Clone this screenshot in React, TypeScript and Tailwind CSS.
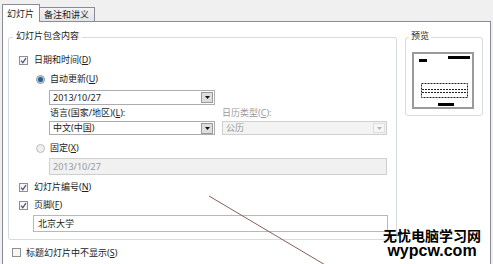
import React from "react";

function Check({ checked = true }: { checked?: boolean }) {
  return (
    <span className="w-[9px] h-[9px] border border-[#8e8f8f] bg-[#f6f6f6] flex items-center justify-center shrink-0">
      {checked && (
        <svg width="7" height="7" viewBox="0 0 7 7">
          <path d="M1 3.6 L2.8 5.6 L6 1.2" stroke="#4b5b78" strokeWidth="1.3" fill="none" />
        </svg>
      )}
    </span>
  );
}

function Radio({ checked }: { checked: boolean }) {
  return checked ? (
    <span className="w-[9px] h-[9px] rounded-full border border-[#8e8f8f] bg-[#e8edf2] flex items-center justify-center shrink-0">
      <span className="w-[5px] h-[5px] rounded-full bg-[#2f5f8f] shadow-[0_0_1px_1px_#9fc0dc]" />
    </span>
  ) : (
    <span className="w-[9px] h-[9px] rounded-full border border-[#bdbdbd] bg-[#efefef] shrink-0" />
  );
}

function Arrow({ color }: { color: string }) {
  return (
    <svg width="5" height="3" viewBox="0 0 5 3">
      <path d="M0 0 H5 L2.5 3 Z" fill={color} />
    </svg>
  );
}

function Combo({ text, w, disabled = false, h }: { text: string; w: string; disabled?: boolean; h: string }) {
  return (
    <div
      className={`${w} ${h} flex items-center border ${
        disabled ? "border-[#cfcfcf] bg-[#f3f3f3] text-[#9a9a9a]" : "border-[#acacac] bg-white text-[#222]"
      }`}
    >
      <span className="pl-[3px] flex-1 leading-[12px]">{text}</span>
      {disabled ? (
        <span className="w-[12px] h-[10px] mr-[1px] border border-[#dedede] bg-[#f6f6f6] flex items-center justify-center">
          <Arrow color="#b5b5b5" />
        </span>
      ) : (
        <span className="w-[12px] h-[11px] mr-[1px] border border-[#9a9a9a] bg-[#dedede] flex items-center justify-center">
          <Arrow color="#111" />
        </span>
      )}
    </div>
  );
}

export default function App() {
  return (
    <div className="w-[493px] h-[264px] bg-[#f0f0f0] flex flex-col relative overflow-hidden text-[9px] text-[#222] font-['Noto_Sans','Noto_Sans_CJK_SC',sans-serif]">
      {/* tabs */}
      <div className="h-[22px] flex items-end pl-[2px] shrink-0">
        <div className="h-[18px] w-[38px] bg-white border-t border-l border-r border-[#898c95] relative z-10 flex items-center pl-[4px] leading-[12px]">
          幻灯片
        </div>
        <div className="h-[14px] w-[55px] mb-[1px] bg-linear-to-b from-[#f4f4f4] to-[#e4e4e4] border-t border-r border-[#898c95] flex items-center pl-[4px] leading-[12px]">
          备注和讲义
        </div>
      </div>
      {/* panel */}
      <div className="-mt-[1px] ml-[2px] w-[489px] flex-1 bg-white border-t border-l border-r border-[#898c95] flex pl-[5px] pt-[8px]">
        <div className="flex flex-col">
          <fieldset className="w-[389px] border border-[#d5dbe0] rounded-[2px]">
            <legend className="ml-[4px] px-[3px] pb-[3px] leading-[12px]">幻灯片包含内容</legend>
            <div className="flex flex-col pl-[10px] pb-[7px]">
              <div className="mt-[10px] h-[10px] flex items-center gap-[6px] leading-[12px]">
                <Check />
                <span>
                  日期和时间(<u>D</u>)
                </span>
              </div>
              <div className="mt-[9px] h-[10px] flex items-center gap-[5px] ml-[17px] leading-[12px]">
                <Radio checked />
                <span>
                  自动更新(<u>U</u>)
                </span>
              </div>
              <div className="mt-[6px] ml-[30px]">
                <Combo text="2013/10/27" w="w-[166px]" h="h-[15px]" />
              </div>
              <div className="mt-[2px] h-[12px] ml-[31px] flex leading-[12px]">
                <span className="w-[172px]">
                  语言(国家/地区)(<u>L</u>):
                </span>
                <span className="text-[#9a9a9a]">
                  日历类型(<u>C</u>):
                </span>
              </div>
              <div className="mt-[2px] ml-[30px] flex gap-[7px]">
                <Combo text="中文(中国)" w="w-[166px]" h="h-[14px]" />
                <Combo text="公历" w="w-[165px]" h="h-[14px]" disabled />
              </div>
              <div className="mt-[8px] h-[10px] flex items-center gap-[5px] ml-[17px] leading-[12px]">
                <Radio checked={false} />
                <span>
                  固定(<u>X</u>)
                </span>
              </div>
              <div className="mt-[5px] ml-[30px] w-[338px] h-[17px] border border-[#cfcfcf] bg-[#f1f1f1] text-[#9a9a9a] flex items-center pl-[3px] leading-[12px]">
                2013/10/27
              </div>
              <div className="mt-[7px] h-[10px] flex items-center gap-[6px] leading-[12px]">
                <Check />
                <span>
                  幻灯片编号(<u>N</u>)
                </span>
              </div>
              <div className="mt-[8px] h-[10px] flex items-center gap-[6px] leading-[12px]">
                <Check />
                <span>
                  页脚(<u>F</u>)
                </span>
              </div>
              <div className="mt-[5px] ml-[14px] w-[355px] h-[17px] border border-[#b8b8b8] bg-white flex items-center pl-[4px] leading-[12px]">
                北京大学
              </div>
            </div>
          </fieldset>
          <div className="mt-[8px] ml-[4px] h-[9px] flex items-center gap-[5px] leading-[12px]">
            <Check checked={false} />
            <span>
              标题幻灯片中不显示(<u>S</u>)
            </span>
          </div>
        </div>
        <fieldset className="ml-[8px] self-start w-[78px] border border-[#d5dbe0] rounded-[3px]">
          <legend className="ml-[3px] px-[2px] pb-[3px] leading-[12px]">预览</legend>
          <div className="mt-[7px] ml-[6px] mb-[6px] w-[62px] h-[57px] border-[2px] border-[#9a9a9a] bg-white">
            <svg width="58" height="53" viewBox="0 0 58 53" className="block">
              <rect x="5" y="5" width="8" height="3" fill="#000" />
              <rect x="34" y="2" width="22" height="3" fill="#000" />
              <rect x="7.5" y="29.5" width="46" height="14" fill="none" stroke="#222" strokeWidth="1" strokeDasharray="2 1" />
              <line x1="8" y1="35.5" x2="53" y2="35.5" stroke="#222" strokeWidth="1" strokeDasharray="2 1" />
              <line x1="8" y1="38.5" x2="53" y2="38.5" stroke="#222" strokeWidth="1" strokeDasharray="2 1" />
              <rect x="24" y="49" width="16" height="3" fill="#000" />
            </svg>
          </div>
        </fieldset>
      </div>

      {/* annotation line */}
      <svg className="absolute inset-0 pointer-events-none" width="493" height="264" viewBox="0 0 493 264">
        <line x1="209" y1="196" x2="327" y2="266" stroke="#86605a" strokeWidth="1" />
      </svg>

      {/* watermark */}
      <div className="absolute left-[383px] top-[227px] flex flex-col items-center text-black">
        <span className="text-[14px] font-bold font-['Noto_Sans_CJK_SC',sans-serif] leading-[16px]">无忧电脑学习网</span>
        <span className="text-[16px] font-bold font-['Liberation_Sans',sans-serif] leading-[15px]">wypcw.com</span>
      </div>
    </div>
  );
}
